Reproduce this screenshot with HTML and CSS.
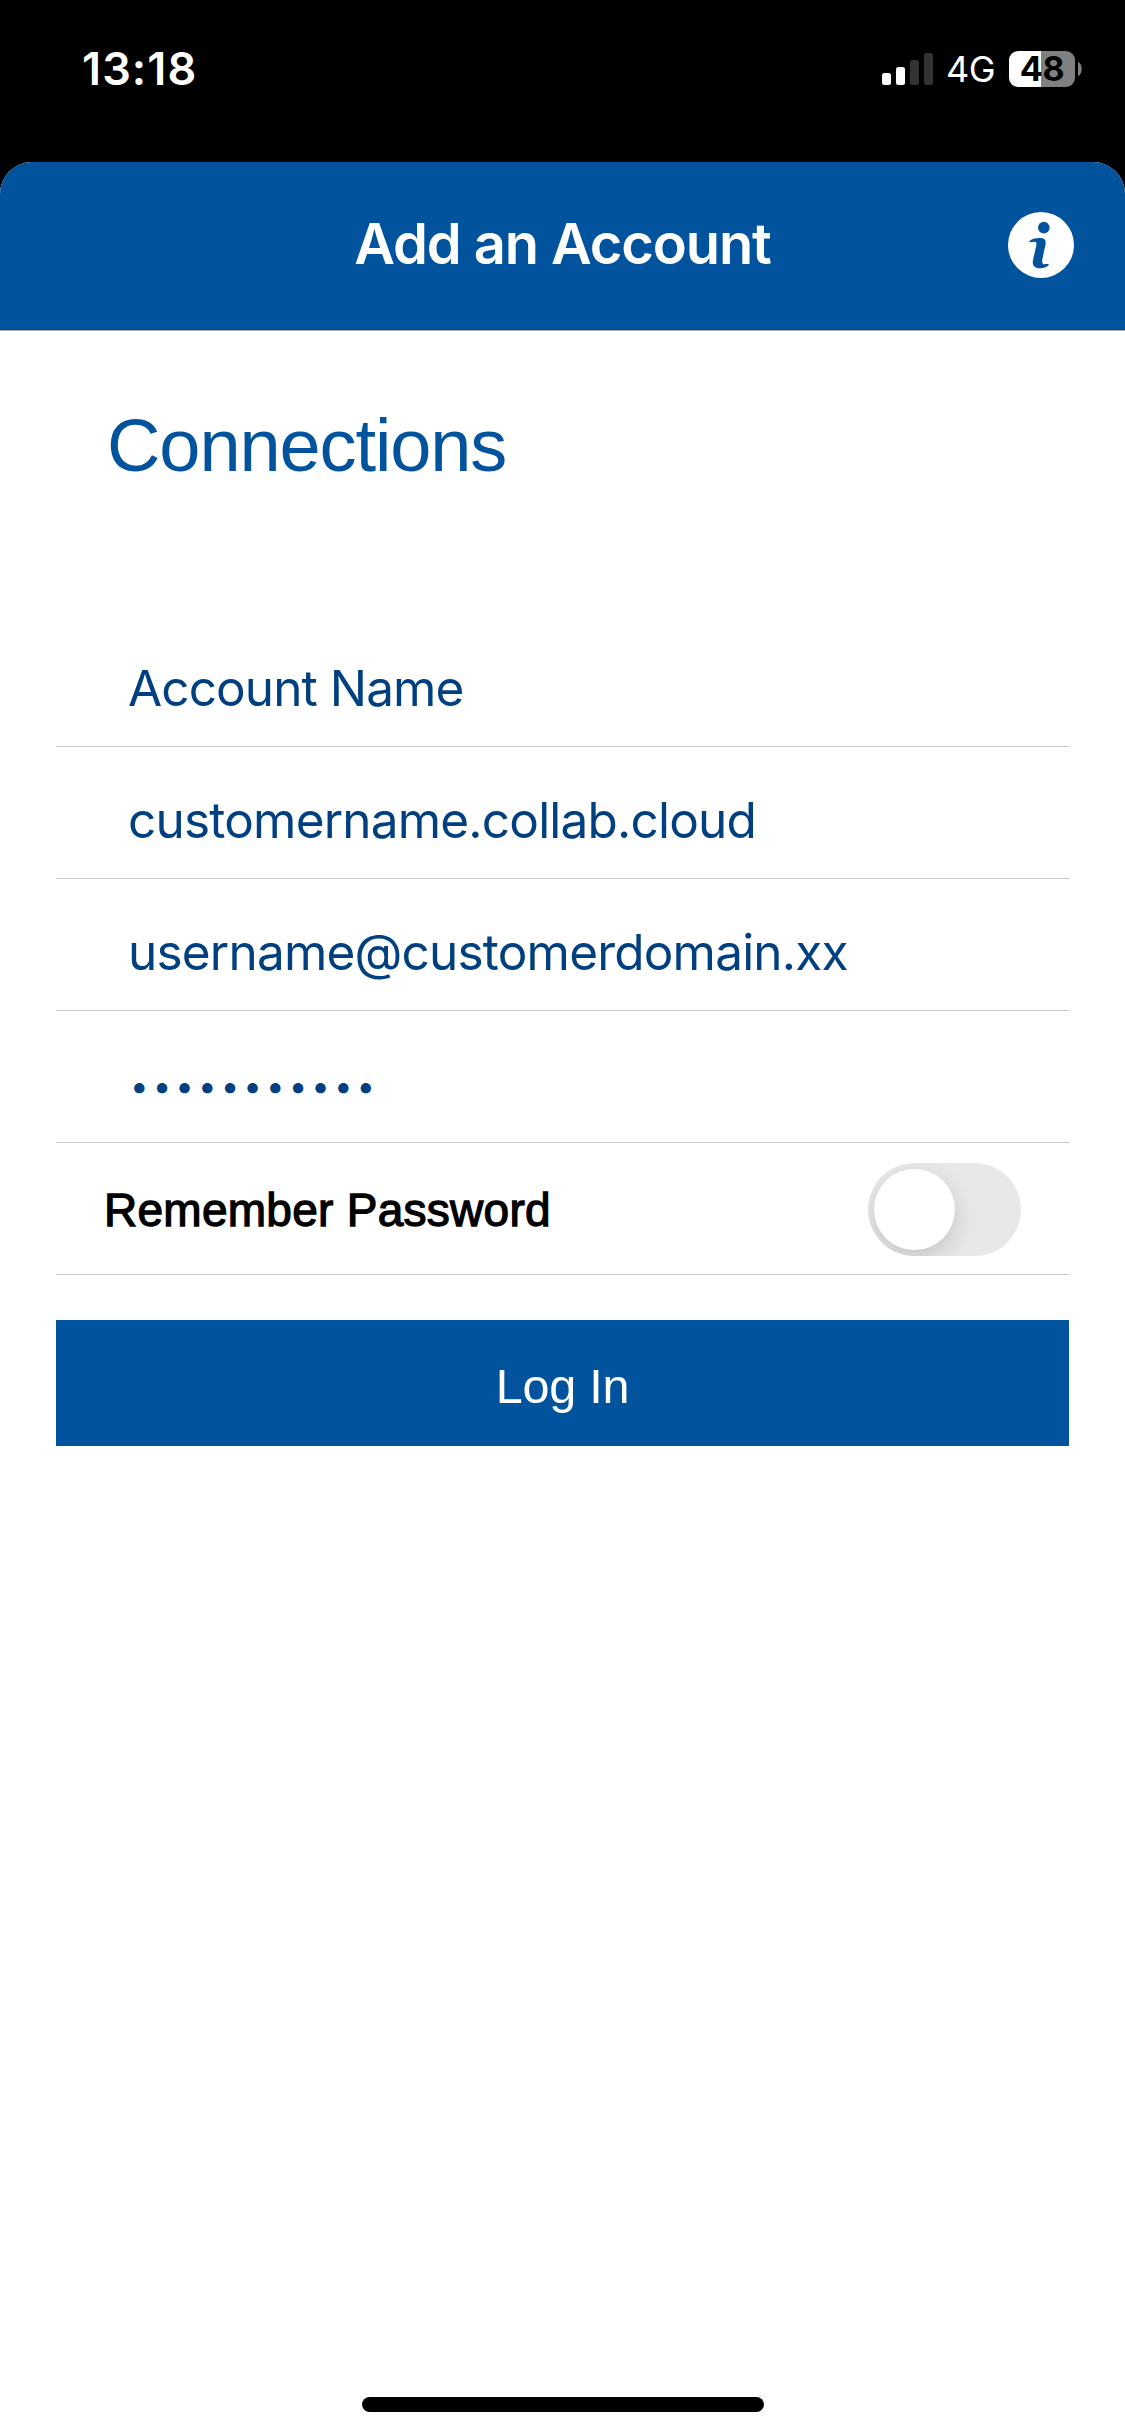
FILE: index.html
```html
<!DOCTYPE html>
<html lang="en">
<head>
<meta charset="utf-8">
<title>Add an Account</title>
<link rel="stylesheet" href="styles.css">
</head>
<body>
<div class="screen">
  <div class="status">
    <span class="time">13:18</span>
    <div class="indicators">
      <svg class="signal" width="51" height="32" viewBox="0 0 51 32">
        <rect x="0" y="20" width="9" height="12" rx="2.5" fill="#fff"/>
        <rect x="14" y="14" width="9" height="18" rx="2.5" fill="#fff"/>
        <rect x="28" y="7" width="9" height="25" rx="2.5" fill="#333"/>
        <rect x="42" y="0" width="9" height="32" rx="2.5" fill="#333"/>
      </svg>
      <span class="network">4G</span>
      <div class="battery"><span class="level">48</span></div>
      <svg class="battery-cap" width="4" height="14" viewBox="0 0 4 14"><path d="M0 0C5 2 5 12 0 14Z" fill="#808080"/></svg>
    </div>
  </div>
  <main class="sheet">
    <header class="navbar">
      <h1 class="title">Add an Account</h1>
      <svg class="info" width="66" height="66" viewBox="0 0 66 66">
        <circle cx="33" cy="33" r="33" fill="#fff"/>
        <circle cx="35.8" cy="15.6" r="5.8" fill="#00539c"/>
        <path d="M21 29.500C23 27 27 26 31.500 26C36.500 26 38.300 28 37.500 32.500L34.300 47.500C33.800 50.500 34.500 52.300 36.500 52.300C38 52.300 39.500 51.700 41 52.500C39.500 55 36 56.200 32.500 56.200C26.500 56.200 24 53.500 25 48L28.300 33.500C29 30.500 28 29.700 26 29.700C24.500 29.700 22.500 30.800 21 29.500Z" fill="#00539c"/>
      </svg>
    </header>
    <h2 class="heading">Connections</h2>
    <form class="form">
      <div class="field"><span class="value account">Account Name</span></div>
      <div class="field"><span class="value server">customername.collab.cloud</span></div>
      <div class="field"><span class="value user">username@customerdomain.xx</span></div>
      <div class="field"><span class="value password">•••••••••••</span></div>
      <div class="remember">
        <span class="remember-label">Remember Password</span>
        <span class="switch"><span class="knob"></span></span>
      </div>
      <button class="login" type="button">Log In</button>
    </form>
    <div class="home-bar"></div>
  </main>
</div>
</body>
</html>
```
FILE: styles.css
```css
* {
  box-sizing: border-box;
}

body {
  margin: 0;
  background: #000;
  font-family: Inter, "Liberation Sans", sans-serif;
}

.screen {
  display: flex;
  flex-direction: column;
  width: 1125px;
  height: 2436px;
  overflow: hidden;
}

.status {
  display: flex;
  justify-content: space-between;
  height: 162px;
  padding: 39px 43px 0 82px;
  color: #fff;
}

.time {
  font-size: 45px;
  font-weight: 600;
  letter-spacing: 1.1px;
  line-height: 60px;
}

.indicators {
  display: flex;
  align-items: center;
  height: 60px;
}

.network {
  width: 61px;
  padding-left: 13px;
  font-size: 36px;
  font-weight: 400;
  letter-spacing: -0.4px;
  line-height: 62px;
}

.battery {
  width: 66px;
  height: 36px;
  margin-left: 15px;
  border-radius: 9px;
  background: linear-gradient(to right, #fff 32px, #808080 32px);
  color: #000;
  text-align: center;
}

.level {
  font-size: 34px;
  font-weight: 700;
  letter-spacing: -0.3px;
  line-height: 36px;
}

.battery-cap {
  margin-left: 3px;
}

.sheet {
  display: flex;
  flex: 1;
  flex-direction: column;
  border-radius: 32px 32px 0 0;
  background: #fff;
  overflow: hidden;
}

.navbar {
  display: grid;
  grid-template-columns: 66px 1fr 66px;
  align-items: center;
  height: 169px;
  padding: 0 51px 3px;
  border-bottom: 1px solid #a6aab0;
  background: #00539c;
}

.title {
  grid-column: 2;
  margin: 0;
  padding-bottom: 1px;
  color: #fff;
  font-size: 56px;
  font-weight: 600;
  letter-spacing: -1.1px;
  line-height: 70px;
  text-align: center;
  white-space: nowrap;
}

.heading {
  margin: 70px 0 124px 107px;
  color: #00539c;
  font-family: "Liberation Sans", sans-serif;
  font-size: 74px;
  font-weight: 400;
  letter-spacing: -1.1px;
  line-height: 90px;
}

.form {
  display: flex;
  flex-direction: column;
  margin: 0 56px;
}

.field {
  display: flex;
  align-items: center;
  height: 132px;
  padding: 15px 0 0 72px;
  border-bottom: 1px solid #c6c6c8;
}

.value {
  color: #004080;
  font-size: 49.5px;
  letter-spacing: -0.8px;
  line-height: 70px;
  white-space: nowrap;
}

.account {
  letter-spacing: -0.9px;
}

.password {
  padding: 3px 0 0 2px;
  font-size: 33px;
  letter-spacing: 4.1px;
}

.remember {
  display: flex;
  align-items: center;
  justify-content: space-between;
  height: 132px;
  padding: 2px 48px 0 48px;
  border-bottom: 1px solid #c6c6c8;
}

.remember-label {
  color: #000;
  font-family: "Liberation Sans", sans-serif;
  font-size: 46px;
  letter-spacing: 0.27px;
  line-height: 60px;
  -webkit-text-stroke: 1.3px #000;
}

.switch {
  width: 153px;
  height: 93px;
  padding: 6px;
  border-radius: 47px;
  background: #e8e8e8;
  overflow: hidden;
}

.knob {
  display: block;
  width: 81px;
  height: 81px;
  border-radius: 50%;
  background: #fff;
  box-shadow: 0 9px 24px rgba(0, 0, 0, 0.15);
}

.login {
  height: 126px;
  margin-top: 45px;
  padding: 5px 0 0;
  border: 0;
  background: #00539c;
  color: #fff;
  font-family: "Liberation Sans", sans-serif;
  font-size: 48.5px;
  letter-spacing: -0.2px;
  line-height: 60px;
}

.home-bar {
  width: 402px;
  height: 15px;
  margin: auto 0 24px 362px;
  border-radius: 8px;
  background: #000;
}
```
